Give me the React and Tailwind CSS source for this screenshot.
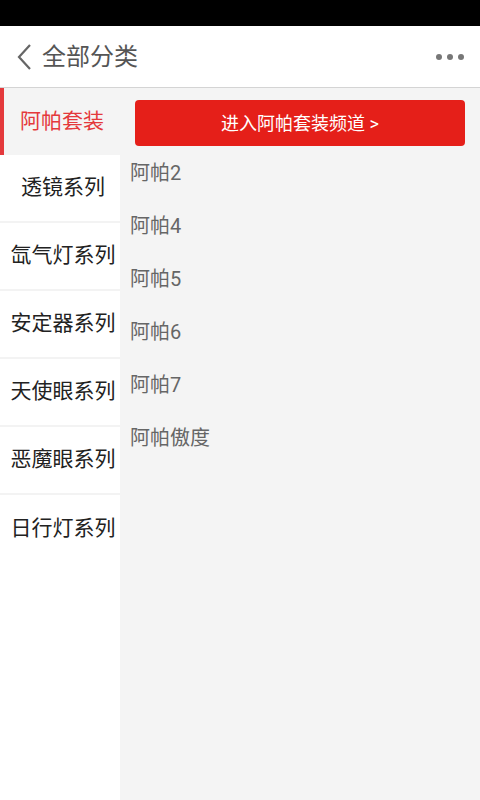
import { useState } from "react";

const categories = [
  "阿帕套装",
  "透镜系列",
  "氙气灯系列",
  "安定器系列",
  "天使眼系列",
  "恶魔眼系列",
  "日行灯系列",
];

const subItems = ["阿帕2", "阿帕4", "阿帕5", "阿帕6", "阿帕7", "阿帕傲度"];

const font = { fontFamily: 'Roboto, "Noto Sans CJK SC", "Noto Sans", sans-serif' };

const App = () => {
  const [active, setActive] = useState(0);

  return (
    <div className="w-[480px] h-[800px] flex flex-col bg-white overflow-hidden" style={font}>
      {/* status bar */}
      <div className="h-[26px] bg-black shrink-0" />

      {/* header */}
      <div className="h-[62px] shrink-0 flex items-center justify-between border-b border-[#d4d4d4] bg-white pl-[16px] pr-[16px]">
        <div className="flex items-center gap-[10px]">
          <svg width="16" height="28" viewBox="0 0 16 28" fill="none">
            <path d="M14 2 L3 14 L14 26" stroke="#666" strokeWidth="2.2" />
          </svg>
          <span className="text-[24px] leading-none text-[#555]">全部分类</span>
        </div>
        <div className="flex items-center gap-[5px]">
          <span className="w-[6px] h-[6px] rounded-full bg-[#777]" />
          <span className="w-[6px] h-[6px] rounded-full bg-[#777]" />
          <span className="w-[6px] h-[6px] rounded-full bg-[#777]" />
        </div>
      </div>

      <div className="flex flex-1 min-h-0">
        {/* sidebar */}
        <div className="w-[120px] shrink-0 bg-white">
          {categories.map((c, i) =>
            i === active ? (
              <div
                key={c}
                onClick={() => setActive(i)}
                className="h-[67px] flex items-center justify-center bg-[#f4f4f4] border-l-4 border-[#e4393c] text-[21px] text-[#e4393c]"
              >
                {c}
              </div>
            ) : (
              <div
                key={c}
                onClick={() => setActive(i)}
                className={
                  i === categories.length - 1
                    ? "h-[68px] flex items-center justify-center pl-[6px] text-[21px] text-[#222] whitespace-nowrap"
                    : "h-[68px] flex items-center justify-center pl-[6px] border-b-2 border-[#f3f3f3] text-[21px] text-[#222] whitespace-nowrap"
                }
              >
                {c}
              </div>
            )
          )}
        </div>

        {/* content */}
        <div className="flex-1 bg-[#f4f4f4] pt-[12px]">
          <button className="mx-[15px] w-[330px] h-[46px] rounded-[4px] bg-[#e51f19] text-white text-[18px]">
            进入{categories[active]}频道 &gt;
          </button>
          <div className="pl-[10px]">
            {subItems.map((s) => (
              <div key={s} className="h-[53px] flex items-center text-[20px] text-[#666]">
                {s}
              </div>
            ))}
          </div>
        </div>
      </div>
    </div>
  );
};

export default App;
